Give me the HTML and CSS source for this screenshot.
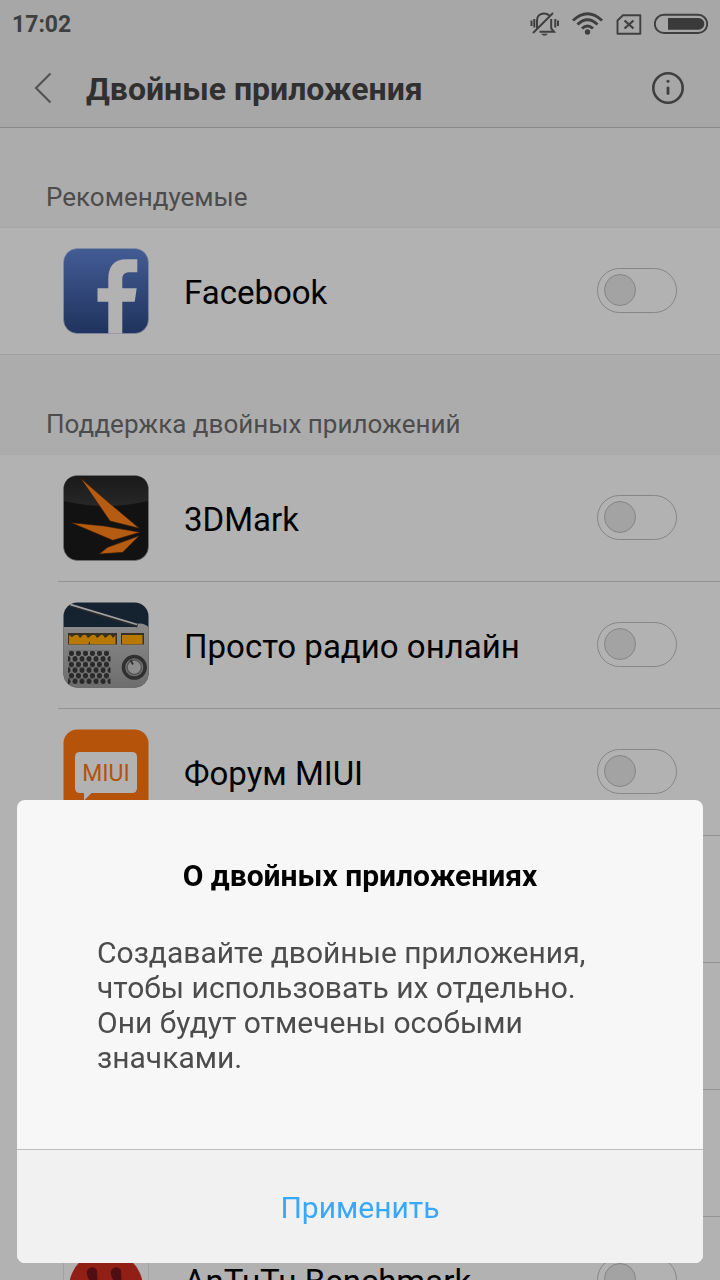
FILE: index.html
```html
<!DOCTYPE html>
<html lang="ru">
<head>
<meta charset="utf-8">
<meta name="viewport" content="width=device-width, initial-scale=1">
<title>Двойные приложения</title>
<link rel="stylesheet" href="styles.css">
</head>
<body>
<div class="screen">
  <header class="top">
    <div class="status">
      <span class="clock">17:02</span>
      <svg width="30" height="24" viewBox="0 0 30 24" fill="none" stroke="#3f3f3f">
        <path d="M7 17V8.500C7 4 10 1.500 14 1.500C16 1.500 18 2.200 19.300 3.500M21.200 7V16.500L24 19.800H9.500" stroke-width="2"/>
        <path d="M3 21L23 1" stroke-width="2"/>
        <path d="M1.500 8.500V14M4.300 7V15.500M25.300 7V15.500M28 8.500V14" stroke-width="2"/>
        <path d="M11 21.800H18L16 23.500H13Z" fill="#3f3f3f" stroke="none"/>
      </svg>
      <svg width="32" height="24" viewBox="0 0 32 24" fill="none" stroke="#3f3f3f" stroke-width="3">
        <path d="M1 8.500Q15.500 -5 30 8.500M5.500 12.500Q15.500 3 25.500 12.500M10 16.500Q15.500 11.500 21 16.500"/>
        <circle cx="15.500" cy="20" r="2.700" fill="#3f3f3f" stroke="none"/>
      </svg>
      <svg width="26" height="24" viewBox="0 0 26 24" fill="none" stroke="#3f3f3f">
        <path d="M7 3.200H24.300V21.800H1.500V8.500Z" stroke-width="1.900" stroke-linejoin="round"/>
        <path d="M8.500 8.500L17.500 16.500M17.500 8.500L8.500 16.500" stroke-width="2.300"/>
      </svg>
      <svg width="54" height="24" viewBox="0 0 54 24">
        <rect x=".8" y="2.800" width="52.400" height="18.200" rx="9.100" fill="none" stroke="#3f3f3f" stroke-width="1.900"/>
        <path d="M14 6H44.500A5.900 5.900 0 0 1 44.500 17.800H14Z" fill="#3a3a3a"/>
      </svg>
    </div>
    <div class="bar">
      <button class="icon-button back" type="button" aria-label="Назад">
        <svg width="18" height="32" viewBox="0 0 18 32" fill="none" stroke="#545454" stroke-width="2.200"><path d="M16.500 1.500L2 16L16.500 30.500"/></svg>
      </button>
      <h1 class="title">Двойные приложения</h1>
      <button class="icon-button" type="button" aria-label="Информация">
        <svg width="32" height="32" viewBox="0 0 32 32" fill="none" stroke="#3f3f3f"><circle cx="16" cy="16" r="14.700" stroke-width="2.600"/><circle cx="16" cy="9.300" r="1.500" fill="#3f3f3f" stroke="none"/><path d="M16 16V21.500" stroke-width="2.800" stroke-linecap="round"/></svg>
      </button>
    </div>
  </header>

  <main>
    <section>
      <h2 class="group">Рекомендуемые</h2>
      <ul class="list full">
        <li class="row">
          <svg class="app" viewBox="0 0 86 86">
            <defs><linearGradient id="fb" x2="0" y2="1"><stop stop-color="#435c94"/><stop offset="1" stop-color="#20335e"/></linearGradient></defs>
            <rect x=".5" y=".5" width="85" height="85" rx="14" fill="url(#fb)" stroke="#8790a5" stroke-width=".6"/>
            <path d="M45.300 85.500V53.700H34.500V40.300H45.300V31C45.300 18 51.500 11.300 63 11.300H74.300V24.300H67C61.500 24.300 59.300 26.500 59.300 31.500V40.300H73.700L71.700 53.700H59.300V85.500Z" fill="#b2b2b2"/>
          </svg>
          <label class="name" for="t1">Facebook</label>
          <input class="toggle" id="t1" type="checkbox" role="switch">
        </li>
      </ul>
    </section>

    <section>
      <h2 class="group">Поддержка двойных приложений</h2>
      <ul class="list">
        <li class="row">
          <svg class="app" viewBox="0 0 86 86">
            <defs><linearGradient id="dm" x2="0" y2="1"><stop stop-color="#1a1a1a"/><stop offset="1" stop-color="#272727"/></linearGradient></defs>
            <rect x=".5" y=".5" width="85" height="85" rx="14" fill="#121212" stroke="#777" stroke-width=".6"/>
            <path d="M1 26V15Q1 1 15 1H71Q85 1 85 15V26Q43 36 1 26Z" fill="url(#dm)"/>
            <g fill="#b65c12" stroke="#3a1d06" stroke-width=".6"><path d="M17.700 3.300L45 27L76.300 53.300L47 46Z"/><path d="M8.300 47.700L41 51L77 57.300L49.700 65.300Z"/><path d="M76.300 60.700L59.700 77.300L36.300 79L44.700 72.300Z"/></g>
          </svg>
          <label class="name" for="t2">3DMark</label>
          <input class="toggle" id="t2" type="checkbox" role="switch">
        </li>
        <li class="row">
          <svg class="app" viewBox="0 0 86 86">
            <defs>
              <linearGradient id="rd" x2="0" y2="1"><stop stop-color="#8b8b8b"/><stop offset="1" stop-color="#6d6d6d"/></linearGradient>
              <pattern id="gr" x="4" y="48.500" width="7" height="11.200" patternUnits="userSpaceOnUse"><ellipse cx="4.500" cy="2.800" rx="2.600" ry="2.700" fill="#292929"/><ellipse cx="1" cy="8.400" rx="2.600" ry="2.700" fill="#292929"/><ellipse cx="8" cy="8.400" rx="2.600" ry="2.700" fill="#292929"/></pattern>
              <clipPath id="rc"><rect x=".5" y=".5" width="85" height="85" rx="14"/></clipPath>
            </defs>
            <g clip-path="url(#rc)">
              <rect width="86" height="86" fill="#152330"/>
              <path d="M0 25H72V22Q82 20 86 26V86H0Z" fill="url(#rd)"/>
              <path d="M7 3L74.500 24" stroke="#292929" stroke-width="3"/>
              <path d="M7 2.300L74 22.500" stroke="#a0a0a0" stroke-width="1.800"/>
              <path d="M5 31H54V42.500H5ZM58 31H81V42.500H58Z" fill="#3a3123"/>
              <path d="M6 33L9 35L12 33H15L17 36L20 33H23L25 36L29 33H32L34 36L38 33H40L42 36L46 33H48L50 36L52.500 33V42.300H27V39L25 42.300H6ZM59 33H79.500V42.300H59Z" fill="#b77900"/>
              <rect x="5" y="48.500" width="42.500" height="33.600" fill="url(#gr)"/>
              <circle cx="71.300" cy="65.300" r="10.800" fill="#747474" stroke="#303030" stroke-width="3.500"/>
              <circle cx="71.300" cy="65.300" r="7.200" fill="#8d8d8d" stroke="#555" stroke-width="1.500"/>
              <path d="M67.500 58L70 62.500" stroke="#303030" stroke-width="1.800"/>
            </g>
          </svg>
          <label class="name" for="t3">Просто радио онлайн</label>
          <input class="toggle" id="t3" type="checkbox" role="switch">
        </li>
        <li class="row">
          <svg class="app" viewBox="0 0 86 86">
            <rect x=".5" y=".5" width="85" height="85" rx="14" fill="#b5530b"/>
            <path d="M17 23H69Q74 23 74 28V59Q74 64 69 64H28.500L21 71.500V64H17Q12 64 12 59V28Q12 23 17 23Z" fill="#b2b2b2"/>
            <text class="badge" x="43" y="52" text-anchor="middle">MIUI</text>
          </svg>
          <label class="name" for="t4">Форум MIUI</label>
          <input class="toggle" id="t4" type="checkbox" role="switch">
        </li>
        <li class="row"></li>
        <li class="row"></li>
        <li class="row"></li>
        <li class="row">
          <svg class="app" viewBox="0 0 86 86">
            <rect x=".5" y=".5" width="85" height="85" rx="3" fill="#b2b2b2" stroke="#a2a2a2"/>
            <circle cx="43" cy="51" r="37" fill="#921f16"/>
            <path d="M24 34C26 29 33 29 34 34L35 50C29 48 23 41 24 34ZM48 34C50 29 57 29 58 34L59 50C53 48 47 41 48 34Z" fill="#500d12"/>
          </svg>
          <label class="name" for="t5">AnTuTu Benchmark</label>
          <input class="toggle" id="t5" type="checkbox" role="switch">
        </li>
      </ul>
    </section>
  </main>
</div>

<div class="dialog" role="dialog" aria-modal="true" aria-labelledby="about">
  <div class="dialog-body">
    <h2 class="dialog-title" id="about">О двойных приложениях</h2>
    <p class="dialog-text">Создавайте двойные приложения, чтобы использовать их отдельно. Они будут отмечены особыми значками.</p>
  </div>
  <button class="apply" type="button">Применить</button>
</div>
</body>
</html>
```

FILE: styles.css
```css
* { box-sizing: border-box; }

body {
  margin: 0;
  background: #b2b2b2;
  color: #000;
  font-family: Roboto, "Noto Sans", sans-serif;
}

h1, h2, p, ul { margin: 0; padding: 0; }
button { border: 0; padding: 0; background: none; font: inherit; }
svg { display: block; flex: none; }

.screen { height: 100vh; overflow: hidden; }

.top {
  background: #a7a7a7;
  border-bottom: 1px solid #888;
}

.status {
  display: flex;
  align-items: center;
  gap: 12px;
  height: 48px;
  padding: 0 12px;
  color: #3f3f3f;
}

.clock {
  flex: 1;
  padding-top: 2px;
  font-size: 23px;
  font-weight: 700;
  line-height: 28px;
}

.bar {
  display: flex;
  align-items: center;
  height: 79px;
  padding: 0 36px 0 34px;
}

.back { width: 52px; }

.title {
  flex: 1;
  padding-top: 2px;
  color: #303030;
  font-size: 32px;
  font-weight: 700;
  line-height: 40px;
}

.group {
  height: 100px;
  padding: 52px 46px 0;
  background: #acacac;
  border-bottom: 1px solid #a8a8a8;
  color: #4c4c4c;
  font-size: 26px;
  font-weight: 400;
  line-height: 34px;
}

.list { list-style: none; }

.row {
  position: relative;
  display: flex;
  align-items: center;
  height: 127px;
  padding: 0 43px 1px 63px;
}

.row::after {
  content: "";
  position: absolute;
  right: 0;
  bottom: 0;
  left: 58px;
  height: 1px;
  background: #949494;
}

.full .row::after { left: 0; background: #a0a0a0; }

.app { width: 86px; height: 86px; }

.badge {
  fill: #b5530b;
  font-family: Roboto, sans-serif;
  font-size: 23px;
}

.name {
  flex: 1;
  padding: 3px 0 0 35px;
  font-size: 33px;
  line-height: 40px;
}

.toggle {
  display: flex;
  align-items: center;
  appearance: none;
  width: 80px;
  height: 45px;
  margin: 0 0 2px;
  padding: 0 6px;
  border: 1px solid #868686;
  border-radius: 23px;
}

.toggle::before {
  content: "";
  box-sizing: border-box;
  width: 32px;
  height: 32px;
  border: 1px solid #868686;
  border-radius: 50%;
  background: #a3a3a3;
}

.toggle:checked { justify-content: flex-end; }

.dialog {
  position: fixed;
  right: 17px;
  bottom: 17px;
  left: 17px;
  overflow: hidden;
  border-radius: 8px;
  background: #f7f7f7;
}

.dialog-body { padding: 56px 80px 74px; }

.dialog-title {
  margin-bottom: 39px;
  font-size: 30px;
  font-weight: 700;
  line-height: 40px;
  text-align: center;
}

.dialog-text {
  color: #4c4c4c;
  font-size: 30px;
  line-height: 35px;
}

.apply {
  width: 100%;
  height: 114px;
  padding-top: 2px;
  border-top: 1px solid #bcbcbc;
  background: #f1f1f1;
  color: #36a8ff;
  font-size: 30px;
}
```
